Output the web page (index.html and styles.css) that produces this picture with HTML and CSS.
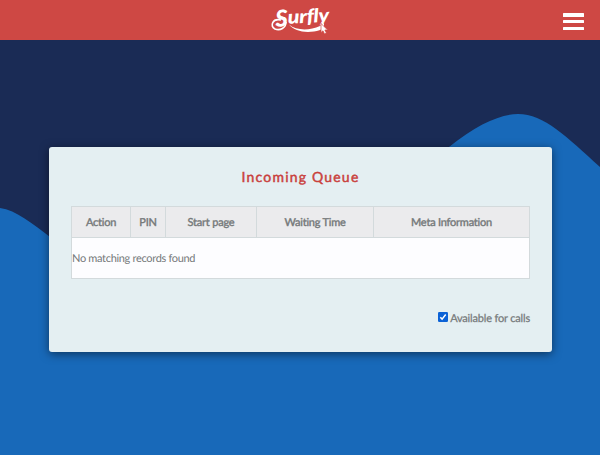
FILE: index.html
```html
<!DOCTYPE html>
<html lang="en">
<head>
<meta charset="utf-8">
<title>Incoming Queue</title>
<link rel="stylesheet" href="styles.css">
</head>
<body>
<header class="topbar">
  <svg class="logo" width="64" height="34" viewBox="0 0 64 34" aria-label="Surfly">
    <g transform="rotate(-3 20 20)">
      <text class="logo-initial" x="6.5" y="24" textLength="12" lengthAdjust="spacingAndGlyphs">S</text>
      <text class="logo-text" x="19" y="21.8" textLength="41" lengthAdjust="spacingAndGlyphs">urfly</text>
    </g>
    <path class="swash-line" d="M12 18C3 16 1 24 6 27C11 29 17 26 17 20"/>
    <path class="swash" d="M20 22.5C27 28.5 40 29 51 24L55 21V26C52 28 49 29 45 29.5C34 31 25 28.5 20 22.5Z"/>
    <path class="cursor" d="M52 21.5V30.5L54 28.8L55.5 32L57.4 31L55.9 28H58.7Z"/>
  </svg>
  <button class="menu" aria-label="Menu"><span></span><span></span><span></span></button>
</header>
<main class="stage">
  <svg class="waves" viewBox="0 0 600 415" aria-hidden="true">
    <path d="M0 168C16 170 33 184 50 197C120 250 200 300 290 250C350 212 397 150 449 107C477 84 501 74 518 74C544 74 567 97 600 127V415H0Z"/>
  </svg>
  <section class="card">
    <h1>Incoming Queue</h1>
    <table>
      <colgroup><col class="c-action"><col class="c-pin"><col class="c-page"><col class="c-time"><col></colgroup>
      <thead><tr><th>Action</th><th>PIN</th><th>Start page</th><th>Waiting Time</th><th>Meta Information</th></tr></thead>
      <tbody><tr><td colspan="5">No matching records found</td></tr></tbody>
    </table>
    <label class="available">
      <svg class="check" width="10" height="10" viewBox="0 0 10 10" aria-hidden="true"><rect width="10" height="10" rx="1.3"/><path d="M2.3 5.2L4.1 7.1L7.7 2.5"/></svg>
      <span>Available for calls</span>
    </label>
  </section>
</main>
</body>
</html>
```
FILE: styles.css
```css
* { box-sizing: border-box; }
body {
  margin: 0;
  width: 600px;
  height: 455px;
  overflow: hidden;
  font-family: Lato, sans-serif;
  font-size: 11px;
  letter-spacing: -.32px;
  text-rendering: geometricPrecision;
  color: #75797a;
  background: #1a2b55;
}
.topbar {
  height: 40px;
  display: grid;
  grid-template-columns: 1fr 64px 1fr;
  background: #ce4844;
}
.logo { grid-column: 2; margin: 2px 0 0 1px; overflow: visible; }
.logo-initial, .logo-text { fill: #fff; font-style: italic; font-weight: 900; }
.logo-initial { font-size: 23px; }
.logo-text { font-size: 19px; }
.swash, .cursor { fill: #fff; }
.swash-line { fill: none; stroke: #fff; stroke-width: 1.6; }
.cursor { stroke: #ce4844; stroke-width: .7; }
.menu {
  justify-self: end;
  width: 21px;
  height: 17px;
  margin: 13px 16px 0 0;
  padding: 0;
  border: 0;
  background: none;
  display: flex;
  flex-direction: column;
  justify-content: space-between;
}
.menu span { width: 21px; height: 3.5px; background: #fff; border-radius: .5px; }
.stage { height: 415px; padding: 107px 48px 0 49px; position: relative; }
.waves { position: absolute; inset: 0; width: 600px; height: 415px; fill: #1869b9; }
.card {
  position: relative;
  height: 205px;
  padding: 21px 22px 0;
  border-radius: 3px;
  background: #e4eff2;
  box-shadow: 0 2px 10px rgba(0, 0, 0, .5);
}
h1 {
  margin: 0 0 20px;
  font-size: 14px;
  line-height: 18px;
  font-weight: 400;
  -webkit-text-stroke: .45px #c9403c;
  letter-spacing: 1.2px;
  text-align: center;
  color: #c9403c;
}
table {
  width: 459px;
  table-layout: fixed;
  border-collapse: collapse;
  background: #fdfdff;
}
.c-action { width: 59px; }
.c-pin { width: 35px; }
.c-page { width: 91px; }
.c-time { width: 117px; }
th, td { padding: 0; border: 1px solid #d3dadc; }
th {
  height: 31px;
  background: #ebebed;
  font-weight: 400;
  -webkit-text-stroke: .4px #75797a;
  letter-spacing: -.22px;
  text-align: center;
}
td { height: 41px; text-align: left; }
.available {
  display: flex;
  justify-content: flex-end;
  align-items: center;
  gap: 2px;
  margin-top: 31px;
  height: 16px;
  letter-spacing: -.18px;
  -webkit-text-stroke: .25px #75797a;
}
.check { margin-top: -2px; fill: #0b62d6; }
.check path { fill: none; stroke: #fff; stroke-width: 1.5; }
```
